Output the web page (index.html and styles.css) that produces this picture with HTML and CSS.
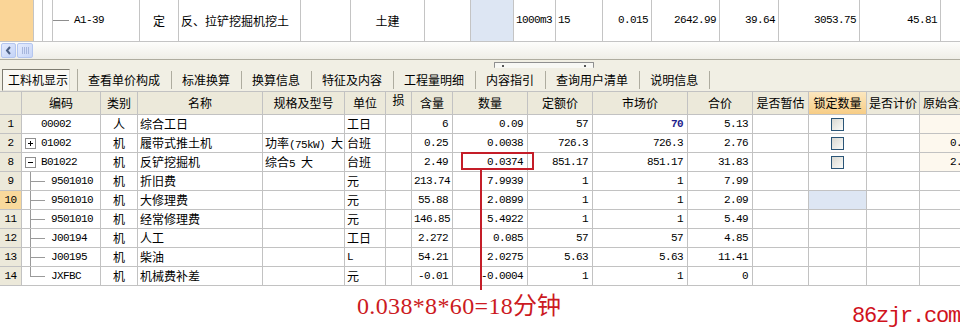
FILE: index.html
```html
<!DOCTYPE html>
<html>
<head>
<meta charset="utf-8">
<title>工料机显示</title>
<link rel="stylesheet" href="styles.css">
</head>
<body>
<div class="page">

  <!-- upper grid: the selected quota line -->
  <div class="toprow">
    <div class="c mark"></div>
    <div class="c"></div>
    <div class="c"></div>
    <div class="c tcode"><span class="dash"></span><span class="m">A1-39</span></div>
    <div class="c ctr">定</div>
    <div class="c">反、拉铲挖掘机挖土</div>
    <div class="c"></div>
    <div class="c ctr">土建</div>
    <div class="c"></div>
    <div class="c blue"></div>
    <div class="c m">1000m3</div>
    <div class="c m">15</div>
    <div class="c m r">0.015</div>
    <div class="c m r">2642.99</div>
    <div class="c m r">39.64</div>
    <div class="c m r">3053.75</div>
    <div class="c m r">45.81</div>
    <div class="c"></div>
  </div>

  <div class="hscroll">
    <span class="sb-btn"><svg width="13" height="13" viewBox="0 0 13 13"><path d="M8 3 L5 6.5 L8 10" fill="none" stroke="#4d6185" stroke-width="2"/></svg></span>
    <span class="sb-thumb"><i></i><i></i><i></i><i></i></span>
  </div>

  <div class="split"><span class="handle"><b></b><b></b></span></div>

  <div class="tabs">
    <div class="tab first"><span class="on">工料机显示</span></div>
    <div class="tab">查看单价构成</div>
    <div class="tab">标准换算</div>
    <div class="tab">换算信息</div>
    <div class="tab">特征及内容</div>
    <div class="tab">工程量明细</div>
    <div class="tab">内容指引</div>
    <div class="tab">查询用户清单</div>
    <div class="tab">说明信息</div>
  </div>

  <div class="gridwrap">
    <div class="grid">
      <!-- header -->
      <div class="h"></div>
      <div class="h">编码</div>
      <div class="h">类别</div>
      <div class="h">名称</div>
      <div class="h">规格及型号</div>
      <div class="h">单位</div>
      <div class="h top">损</div>
      <div class="h">含量</div>
      <div class="h">数量</div>
      <div class="h">定额价</div>
      <div class="h">市场价</div>
      <div class="h">合价</div>
      <div class="h">是否暂估</div>
      <div class="h hot">锁定数量</div>
      <div class="h">是否计价</div>
      <div class="h left">原始含量</div>

      <!-- 1 -->
      <div class="rn m">1</div>
      <div class="c code"><span class="ind"></span><span class="m">00002</span></div>
      <div class="c ctr">人</div>
      <div class="c">综合工日</div>
      <div class="c"></div>
      <div class="c">工日</div>
      <div class="c"></div>
      <div class="c r m">6</div>
      <div class="c r m">0.09</div>
      <div class="c r m">57</div>
      <div class="c r m mk">70</div>
      <div class="c r m">5.13</div>
      <div class="c"></div>
      <div class="c ck"><span class="cb"></span></div>
      <div class="c"></div>
      <div class="c r m cream"></div>

      <!-- 2 -->
      <div class="rn m">2</div>
      <div class="c code"><svg class="box" width="11" height="11" viewBox="0 0 11 11"><rect x=".5" y=".5" width="10" height="10" fill="#fff" stroke="#8e8e8e"/><path d="M3 5.5h5M5.5 3v5" stroke="#000"/></svg><span class="m">01002</span></div>
      <div class="c ctr">机</div>
      <div class="c">履带式推土机</div>
      <div class="c">功率<span class="m">(75kW) </span>大</div>
      <div class="c">台班</div>
      <div class="c"></div>
      <div class="c r m">0.25</div>
      <div class="c r m">0.0038</div>
      <div class="c r m">726.3</div>
      <div class="c r m">726.3</div>
      <div class="c r m">2.76</div>
      <div class="c"></div>
      <div class="c ck"><span class="cb"></span></div>
      <div class="c"></div>
      <div class="c r m cream">0.25</div>

      <!-- 8 -->
      <div class="rn m">8</div>
      <div class="c code"><svg class="box" width="11" height="11" viewBox="0 0 11 11"><rect x=".5" y=".5" width="10" height="10" fill="#fff" stroke="#8e8e8e"/><path d="M3 5.5h5" stroke="#000"/></svg><span class="m">B01022</span></div>
      <div class="c ctr">机</div>
      <div class="c">反铲挖掘机</div>
      <div class="c">综合<span class="m">5 </span>大</div>
      <div class="c">台班</div>
      <div class="c"></div>
      <div class="c r m">2.49</div>
      <div class="c r m">0.0374</div>
      <div class="c r m">851.17</div>
      <div class="c r m">851.17</div>
      <div class="c r m">31.83</div>
      <div class="c"></div>
      <div class="c ck"><span class="cb"></span></div>
      <div class="c"></div>
      <div class="c r m cream">2.49</div>

      <!-- 9 -->
      <div class="rn m">9</div>
      <div class="c code"><span class="tree"></span><span class="m">9501010</span></div>
      <div class="c ctr">机</div>
      <div class="c">折旧费</div>
      <div class="c"></div>
      <div class="c">元</div>
      <div class="c"></div>
      <div class="c r m">213.74</div>
      <div class="c r m">7.9939</div>
      <div class="c r m">1</div>
      <div class="c r m">1</div>
      <div class="c r m">7.99</div>
      <div class="c"></div>
      <div class="c"></div>
      <div class="c"></div>
      <div class="c"></div>

      <!-- 10 -->
      <div class="rn m cur">10</div>
      <div class="c code"><span class="tree"></span><span class="m">9501010</span></div>
      <div class="c ctr">机</div>
      <div class="c">大修理费</div>
      <div class="c"></div>
      <div class="c">元</div>
      <div class="c"></div>
      <div class="c r m">55.88</div>
      <div class="c r m">2.0899</div>
      <div class="c r m">1</div>
      <div class="c r m">1</div>
      <div class="c r m">2.09</div>
      <div class="c"></div>
      <div class="c blue"></div>
      <div class="c"></div>
      <div class="c"></div>

      <!-- 11 -->
      <div class="rn m">11</div>
      <div class="c code"><span class="tree"></span><span class="m">9501010</span></div>
      <div class="c ctr">机</div>
      <div class="c">经常修理费</div>
      <div class="c"></div>
      <div class="c">元</div>
      <div class="c"></div>
      <div class="c r m">146.85</div>
      <div class="c r m">5.4922</div>
      <div class="c r m">1</div>
      <div class="c r m">1</div>
      <div class="c r m">5.49</div>
      <div class="c"></div>
      <div class="c"></div>
      <div class="c"></div>
      <div class="c"></div>

      <!-- 12 -->
      <div class="rn m">12</div>
      <div class="c code"><span class="tree"></span><span class="m">J00194</span></div>
      <div class="c ctr">机</div>
      <div class="c">人工</div>
      <div class="c"></div>
      <div class="c">工日</div>
      <div class="c"></div>
      <div class="c r m">2.272</div>
      <div class="c r m">0.085</div>
      <div class="c r m">57</div>
      <div class="c r m">57</div>
      <div class="c r m">4.85</div>
      <div class="c"></div>
      <div class="c"></div>
      <div class="c"></div>
      <div class="c"></div>

      <!-- 13 -->
      <div class="rn m">13</div>
      <div class="c code"><span class="tree"></span><span class="m">J00195</span></div>
      <div class="c ctr">机</div>
      <div class="c">柴油</div>
      <div class="c"></div>
      <div class="c m">L</div>
      <div class="c"></div>
      <div class="c r m">54.21</div>
      <div class="c r m">2.0275</div>
      <div class="c r m">5.63</div>
      <div class="c r m">5.63</div>
      <div class="c r m">11.41</div>
      <div class="c"></div>
      <div class="c"></div>
      <div class="c"></div>
      <div class="c"></div>

      <!-- 14 -->
      <div class="rn m">14</div>
      <div class="c code"><span class="tree last"></span><span class="m">JXFBC</span></div>
      <div class="c ctr">机</div>
      <div class="c">机械费补差</div>
      <div class="c"></div>
      <div class="c">元</div>
      <div class="c"></div>
      <div class="c r m">-0.01</div>
      <div class="c r m">-0.0004</div>
      <div class="c r m">1</div>
      <div class="c r m">1</div>
      <div class="c r m">0</div>
      <div class="c"></div>
      <div class="c"></div>
      <div class="c"></div>
      <div class="c"></div>
    </div>
  </div>

  <!-- red hand-drawn notes over the grid -->
  <div class="hilite"></div>
  <div class="leader"></div>
  <div class="formula">0.038*8*60=18<span class="cjk">分钟</span></div>
  <div class="site">86zjr.com</div>
</div>
</body>
</html>
```

FILE: styles.css
```css
* {
    box-sizing: border-box;
}
body {
    margin: 0;
    background: #fff;
    color: #000;
    font-family: "Noto Sans CJK SC", sans-serif;
    font-size: 12px;
}
.page {
    position: relative;
    width: 960px;
    height: 329px;
    overflow: hidden;
}
.m {
    font-family: "Liberation Mono", "Noto Sans CJK SC", monospace;
    font-size: 11px;
    letter-spacing: -0.6px;
}

/* cells shared by both grids */
.c {
    background: #fff;
    padding: 0 2px;
    white-space: nowrap;
    overflow: hidden;
    line-height: 18px;
}
.r {
    text-align: right;
    padding-right: 4px;
}
.ctr {
    text-align: center;
}
.blue {
    background: #dde6f3;
}
.cream {
    background: #fdf8ee;
}

/* upper grid */
.toprow {
    display: grid;
    grid-template-columns: 33px 8px 9px 86px 38px 121px 49px 73px 45px 42px 41px 46px 48px 67px 58px 80px 80px 20px;
    column-gap: 1px;
    width: 961px;
    height: 42px;
    background: #c4c4c4;
    border-bottom: 1px solid #c4c4c4;
}
.toprow .c {
    line-height: 41px;
}
.toprow .r {
    padding-right: 3px;
}
.toprow .mark {
    background: #fad597;
}
.tcode {
    display: flex;
    align-items: center;
    padding: 0;
}
.dash {
    width: 16px;
    height: 1px;
    background: #8e8e8e;
    margin-right: 5px;
}

/* horizontal scrollbar */
.hscroll {
    height: 18px;
    display: flex;
    align-items: center;
    gap: 1px;
    padding-left: 1px;
    background: linear-gradient(#fdfdfb, #efeee7);
    border-bottom: 1px solid #aeac9f;
}
.sb-btn {
    width: 15px;
    height: 15px;
    display: flex;
    align-items: center;
    justify-content: center;
    border: 1px solid #b4c6ef;
    border-radius: 2px;
    background: linear-gradient(135deg, #e4ebfd, #c3d3f7);
}
.sb-thumb {
    width: 16px;
    height: 15px;
    display: flex;
    align-items: center;
    justify-content: center;
    gap: 1px;
    border: 1px solid #b4c6ef;
    border-radius: 2px;
    background: linear-gradient(135deg, #e4ebfd, #c8d6f7);
}
.sb-thumb i {
    width: 1px;
    height: 7px;
    background: #a7b6dc;
}

/* splitter between the two grids */
.split {
    height: 8px;
    display: flex;
    align-items: flex-end;
    padding-left: 494px;
    background: #f1efe4;
}
.handle {
    width: 100px;
    height: 6px;
    display: flex;
    align-items: center;
    justify-content: space-between;
    padding: 0 7px;
    border: 1px solid #8f8f8f;
    border-bottom: 0;
    border-radius: 1px;
    background: #f8f8f4;
}
.handle b {
    width: 2px;
    height: 2px;
    background: #555;
}

/* tabs */
.tabs {
    height: 23px;
    display: flex;
    align-items: center;
    background: #f1efe4;
}
.tab {
    height: 18px;
    line-height: 18px;
    padding: 0 11px 0 10px;
    border-right: 1px solid #aeac9f;
    white-space: nowrap;
}
.tab.first {
    height: 22px;
    display: flex;
    align-items: center;
    padding: 0 7px 0 2px;
}
.tab.first .on {
    height: 22px;
    line-height: 20px;
    padding: 0 1px 0 5px;
    border: 1px solid;
    border-color: #7d7b70 #dcdad0 #e9e7de #7d7b70;
    background: #f9f8f3;
}

/* lower grid */
.gridwrap {
    width: 960px;
    overflow: hidden;
}
.grid {
    display: grid;
    grid-template-columns: 21px 78px 36px 124px 81px 40px 25px 40px 74px 64px 94px 64px 55px 57px 52px 58px;
    grid-template-rows: 22px;
    grid-auto-rows: 18px;
    gap: 1px;
    width: 978px;
    background: #c2c2c2;
    border-top: 1px solid #c2c2c2;
    border-bottom: 1px solid #c2c2c2;
}
.h {
    background: #ece9da;
    text-align: center;
    line-height: 22px;
    white-space: nowrap;
    overflow: hidden;
}
.h.top {
    line-height: 15px;
}
.h.left {
    text-align: left;
    padding-left: 3px;
}
.h.hot {
    background: linear-gradient(#fce7bf, #f7cd86);
}
.rn {
    background: #ece9da;
    text-align: center;
    line-height: 18px;
}
.rn.cur {
    background: #f9d99c;
}
.mk {
    color: #1c1c8c;
    font-weight: bold;
}

.code {
    display: flex;
    align-items: stretch;
    padding-left: 3px;
}
.code .box {
    align-self: center;
    margin-right: 5px;
}
.ind {
    width: 16px;
}
.tree {
    width: 26px;
    background:
        linear-gradient(#9a9a9a, #9a9a9a) 5px 0 / 1px 100% no-repeat,
        linear-gradient(#9a9a9a, #9a9a9a) 5px 9px / 15px 1px no-repeat;
}
.tree.last {
    background:
        linear-gradient(#9a9a9a, #9a9a9a) 5px 0 / 1px 10px no-repeat,
        linear-gradient(#9a9a9a, #9a9a9a) 5px 9px / 15px 1px no-repeat;
}
.ck {
    display: flex;
    align-items: center;
    justify-content: center;
}
.cb {
    width: 13px;
    height: 13px;
    border: 1px solid #2a5577;
    background: linear-gradient(135deg, #d8d8d2, #fbfbf8);
}

/* annotation */
.hilite {
    position: absolute;
    left: 461px;
    top: 152px;
    width: 73px;
    height: 18px;
    border: 2px solid #c41d28;
}
.leader {
    position: absolute;
    left: 480px;
    top: 169px;
    width: 2px;
    height: 121px;
    background: #c41d28;
}
.formula {
    position: absolute;
    left: 357px;
    top: 292px;
    font: 24px/24px "Liberation Serif", serif;
    letter-spacing: 0.35px;
    color: #cc1a22;
    white-space: nowrap;
}
.formula .cjk {
    font-family: "Noto Sans CJK SC", sans-serif;
    letter-spacing: 0;
}
.site {
    position: absolute;
    left: 852px;
    top: 306px;
    font: 22px/22px "Liberation Mono", monospace;
    letter-spacing: -1.2px;
    color: #d0121c;
    white-space: nowrap;
}
```
